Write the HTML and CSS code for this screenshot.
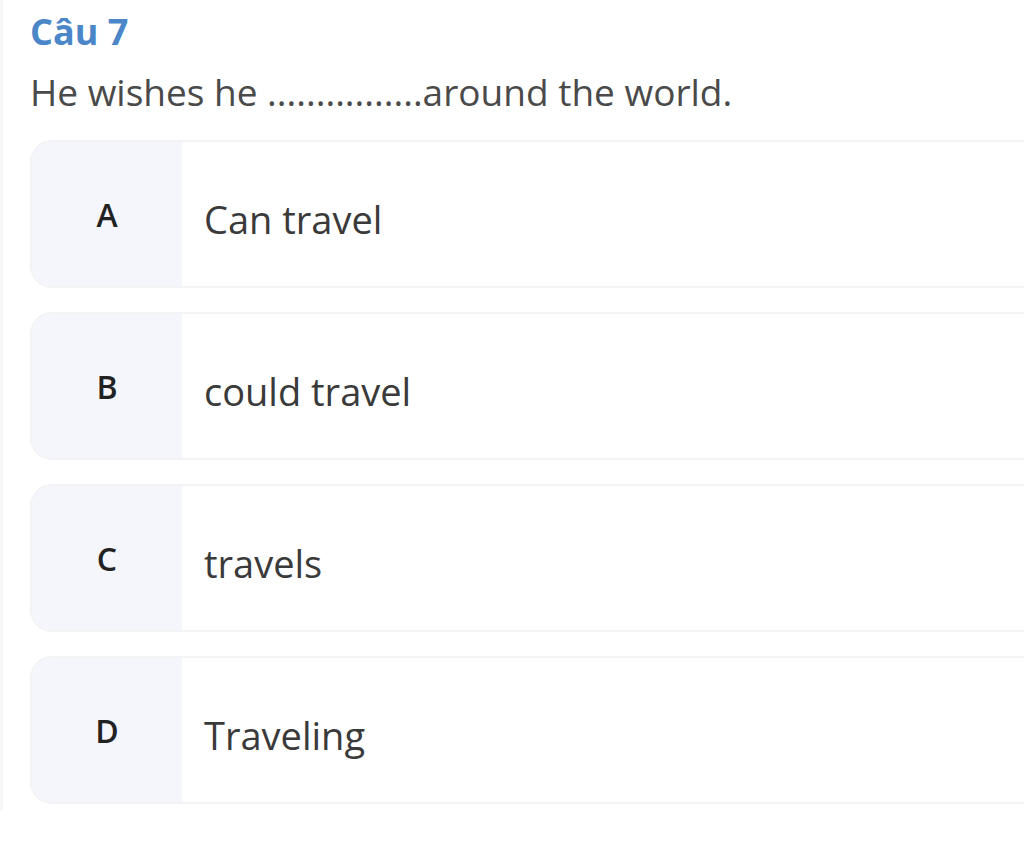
FILE: index.html
```html
<!DOCTYPE html>
<html lang="vi">
<head>
<meta charset="UTF-8" />
<meta name="viewport" content="width=device-width, initial-scale=1" />
<title>Câu 7</title>
<link rel="stylesheet" href="styles.css">
</head>
<body>

<div class="question">
  <h2 class="q-title">Câu 7</h2>
  <p class="q-text">He wishes he ................around the world.</p>

  <div class="answers">
    <div class="answer">
      <div class="answer-key">A</div>
      <div class="answer-text">Can travel</div>
    </div>
    <div class="answer">
      <div class="answer-key">B</div>
      <div class="answer-text">could travel</div>
    </div>
    <div class="answer">
      <div class="answer-key">C</div>
      <div class="answer-text">travels</div>
    </div>
    <div class="answer">
      <div class="answer-key">D</div>
      <div class="answer-text">Traveling</div>
    </div>
  </div>
</div>

</body>
</html>
```

FILE: styles.css
```css
html, body {
  margin: 0;
  padding: 0;
  background: #fff;
  overflow: hidden;
}
body {
  font-family: "Open Sans", "Noto Sans", sans-serif;
  color: #444;
}
.question {
  padding: 10px 0 0 27px;
  border-left: 3px solid #f6f6f6;
  min-height: 800px;
  width: 1100px;
}
.q-title {
  margin: 0;
  font-size: 36px;
  font-weight: 700;
  color: #4a86c8;
  line-height: 44px;
}
.q-text {
  margin: 14px 0 24px;
  font-size: 37px;
  line-height: 48px;
  color: #4a4a4a;
}
.answers {
  display: flex;
  flex-direction: column;
  gap: 24px;
}
.answer {
  display: flex;
  height: 148px;
  border: 2px solid #f3f3f5;
  border-radius: 22px;
  overflow: hidden;
  box-sizing: border-box;
}
.answer-key {
  width: 150px;
  flex: none;
  background: #f4f6fb;
  display: flex;
  align-items: center;
  justify-content: center;
  font-size: 32px;
  font-weight: 600;
  color: #222;
}
.answer-text {
  display: flex;
  align-items: center;
  padding: 10px 0 0 22px;
  font-size: 38px;
  color: #3a3a3a;
}
```
